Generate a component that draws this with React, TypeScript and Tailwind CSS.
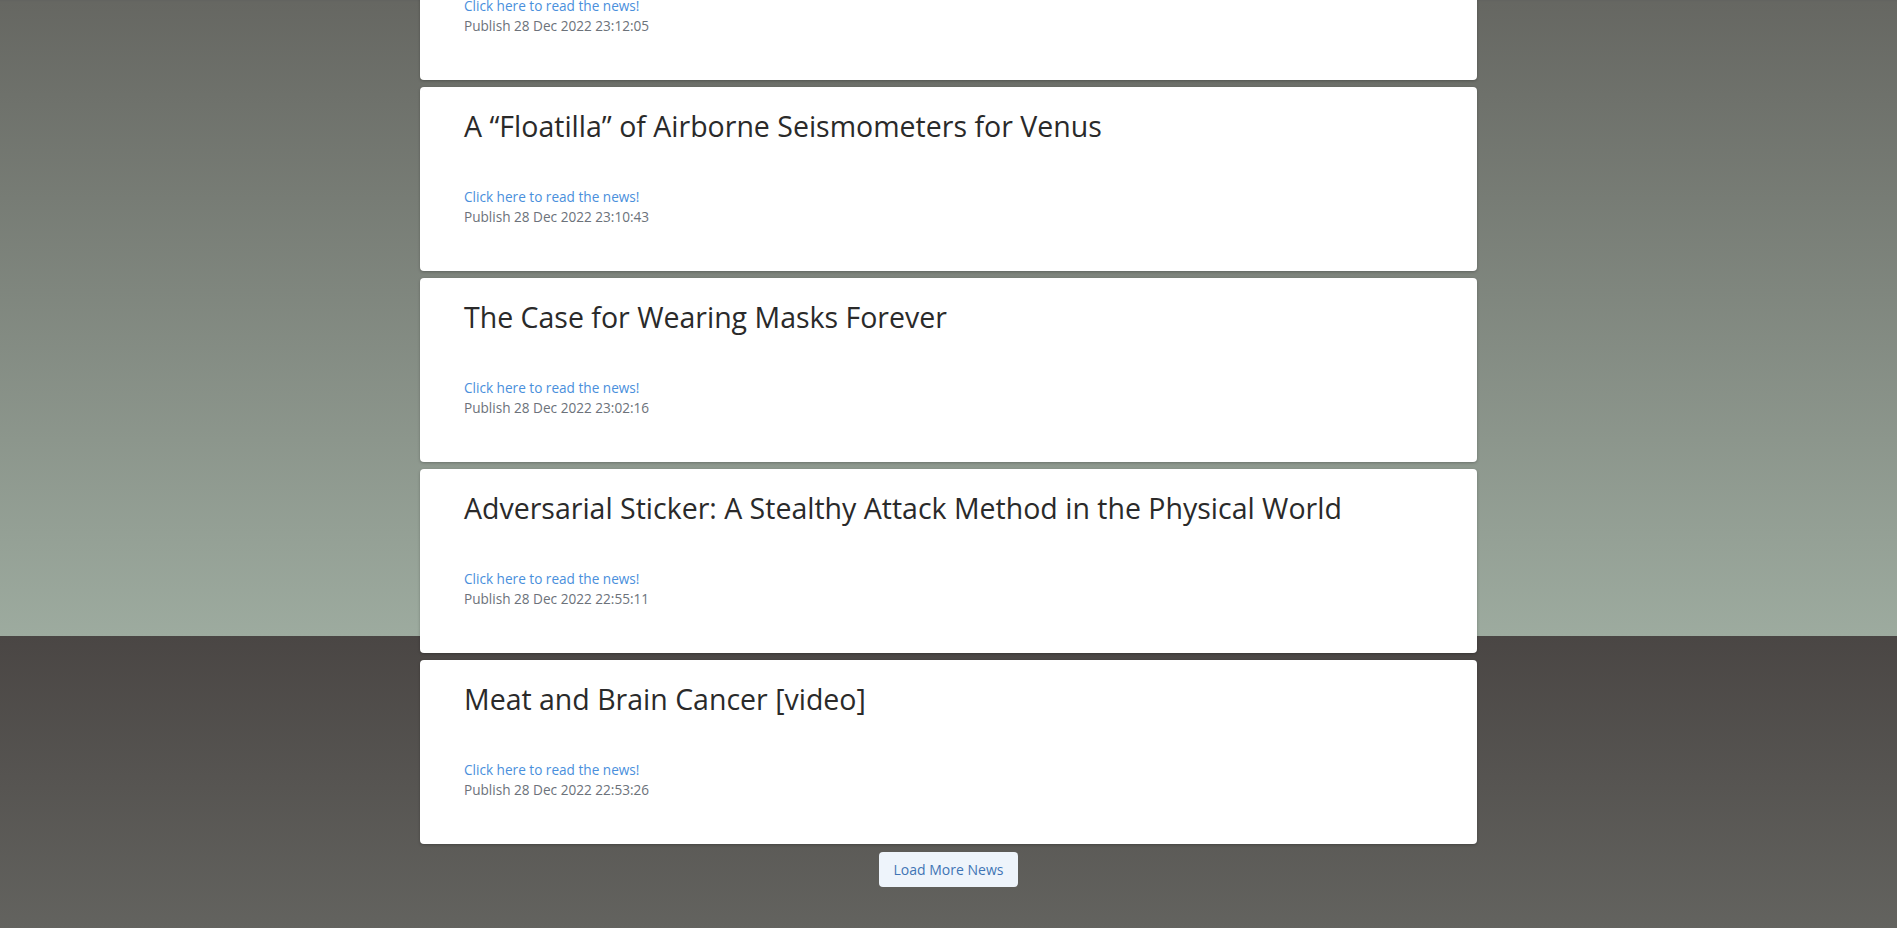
import React from "react";

// News feed items - first one is partially scrolled out of view
const newsItems = [
  {
    title: "Why Sleep Deprivation Makes You Feel Hungry",
    url: "#",
    published: "28 Dec 2022 23:12:05",
  },
  {
    title: "A \u201cFloatilla\u201d of Airborne Seismometers for Venus",
    url: "#",
    published: "28 Dec 2022 23:10:43",
  },
  {
    title: "The Case for Wearing Masks Forever",
    url: "#",
    published: "28 Dec 2022 23:02:16",
  },
  {
    title: "Adversarial Sticker: A Stealthy Attack Method in the Physical World",
    url: "#",
    published: "28 Dec 2022 22:55:11",
  },
  {
    title: "Meat and Brain Cancer [video]",
    url: "#",
    published: "28 Dec 2022 22:53:26",
  },
];

interface NewsCardProps {
  title: string;
  url: string;
  published: string;
}

const NewsCard = ({ title, url, published }: NewsCardProps) => {
  return (
    <div className="h-[184px] bg-white rounded-[4px] shadow-[0_1px_3px_rgba(0,0,0,0.25)] pl-[44px] pr-6 pt-[20px]">
      <h2 className="text-[28.5px] leading-[38px] text-[#2a2a2a] font-medium">
        {title}
      </h2>
      <a
        href={url}
        className="block mt-[42px] text-[13.6px] leading-[20px] text-[#4a8fdc] hover:underline"
      >
        Click here to read the news!
      </a>
      <p className="text-[13.6px] leading-[20px] text-[#6c727a]">
        Publish {published}
      </p>
    </div>
  );
};

export default function App() {
  return (
    <div
      className="min-h-[928px] overflow-hidden bg-[linear-gradient(to_bottom,#626360_0px,#666762_2px,#9dab9f_636px,#4a4644_636px,#63635f_928px)]"
      style={{ fontFamily: '"Open Sans", "Noto Sans", sans-serif' }}
    >
      <div className="w-[1057px] mx-auto -mt-[104px] flex flex-col gap-[7px]">
        {newsItems.map((item) => (
          <NewsCard key={item.published} {...item} />
        ))}
      </div>

      {/* Load more */}
      <div className="flex justify-center mt-[8px]">
        <button className="h-[35px] px-[15px] rounded-[4px] bg-[#eef4fb] text-[14px] text-[#3f74b5]">
          Load More News
        </button>
      </div>
    </div>
  );
}
